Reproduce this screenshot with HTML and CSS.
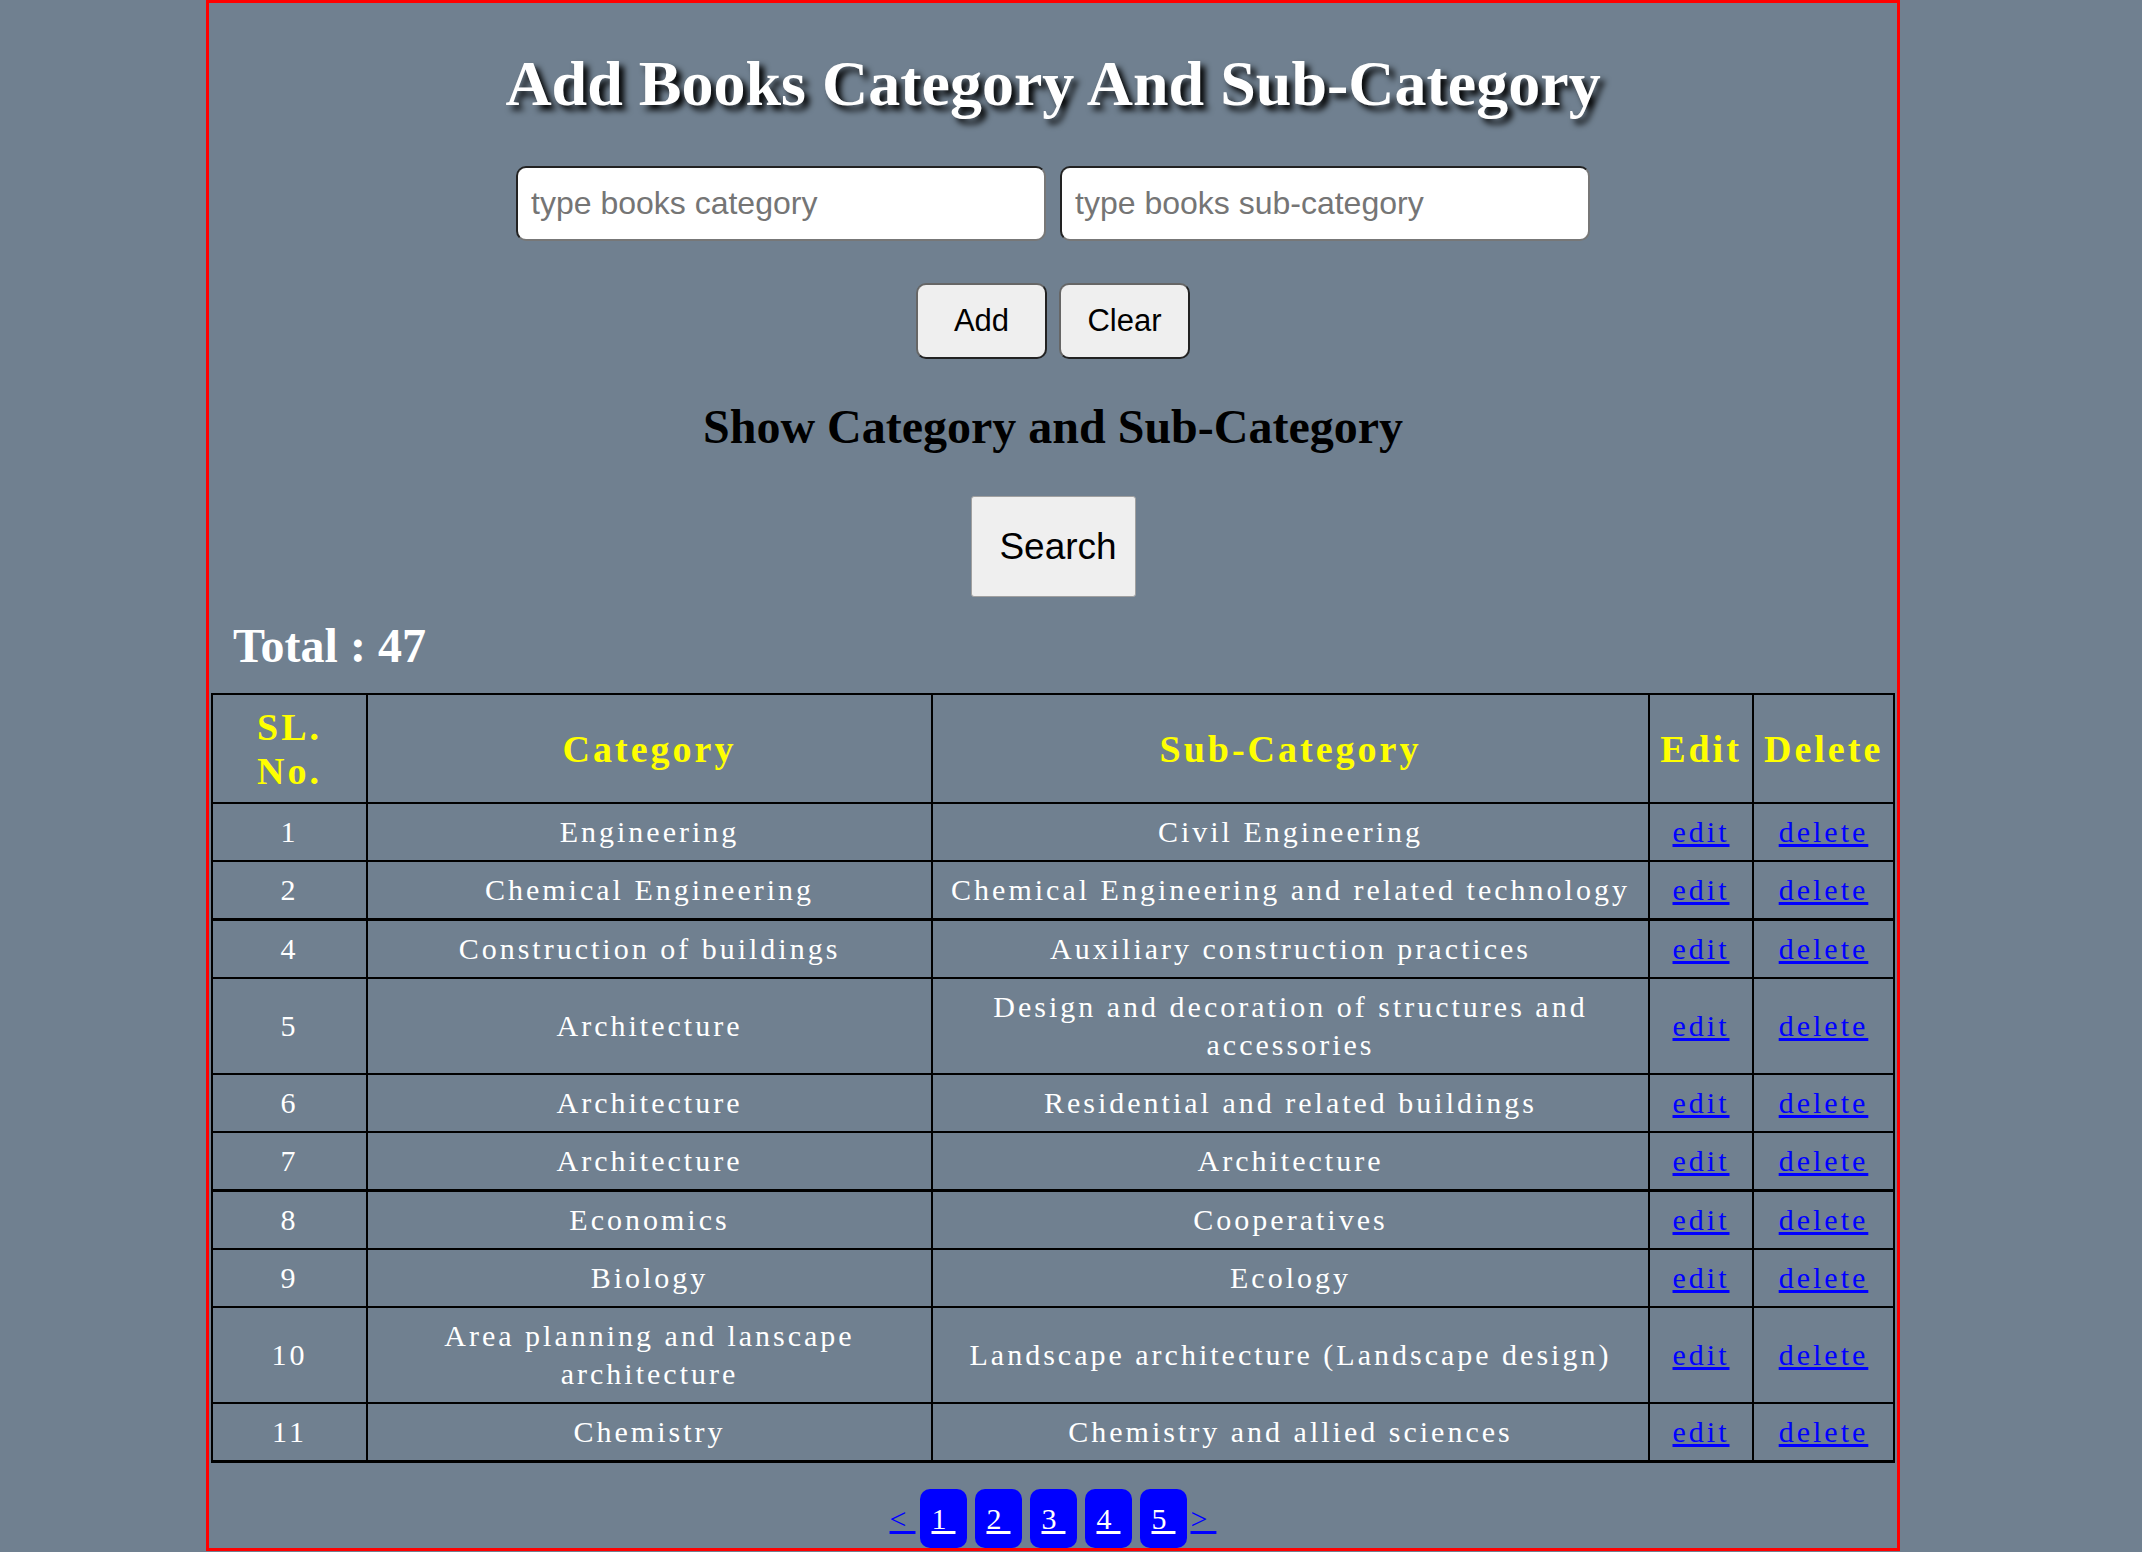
FILE: index.html
```html
<!DOCTYPE html>
<html lang="en">
<head>
<meta charset="utf-8">
<title>Books Category</title>
<link rel="stylesheet" href="styles.css">
</head>
<body>
<div class="page">
  <h1 class="title">Add Books Category And Sub-Category</h1>
  <div class="form-row">
    <input class="field" type="text" placeholder="type books category">
    <input class="field" type="text" placeholder="type books sub-category">
  </div>
  <div class="btn-row">
    <button class="btn">Add</button>
    <button class="btn">Clear</button>
  </div>
  <h2 class="subtitle">Show Category and Sub-Category</h2>
  <div class="search-row">
    <button class="search">Search</button>
  </div>
  <h3 class="total">Total : 47</h3>
  <table class="grid">
    <thead>
      <tr>
        <th class="c-sl">SL. No.</th>
        <th class="c-cat">Category</th>
        <th class="c-sub">Sub-Category</th>
        <th class="c-edit">Edit</th>
        <th class="c-del">Delete</th>
      </tr>
    </thead>
    <tbody>
      <tr><td>1</td><td>Engineering</td><td>Civil Engineering</td><td><a href="#">edit</a></td><td><a href="#">delete</a></td></tr>
      <tr><td>2</td><td>Chemical Engineering</td><td>Chemical Engineering and related technology</td><td><a href="#">edit</a></td><td><a href="#">delete</a></td></tr>
      <tr class="sep"><td>4</td><td>Construction of buildings</td><td>Auxiliary construction practices</td><td><a href="#">edit</a></td><td><a href="#">delete</a></td></tr>
      <tr><td>5</td><td>Architecture</td><td>Design and decoration of structures and accessories</td><td><a href="#">edit</a></td><td><a href="#">delete</a></td></tr>
      <tr><td>6</td><td>Architecture</td><td>Residential and related buildings</td><td><a href="#">edit</a></td><td><a href="#">delete</a></td></tr>
      <tr><td>7</td><td>Architecture</td><td>Architecture</td><td><a href="#">edit</a></td><td><a href="#">delete</a></td></tr>
      <tr class="sep"><td>8</td><td>Economics</td><td>Cooperatives</td><td><a href="#">edit</a></td><td><a href="#">delete</a></td></tr>
      <tr><td>9</td><td>Biology</td><td>Ecology</td><td><a href="#">edit</a></td><td><a href="#">delete</a></td></tr>
      <tr><td>10</td><td>Area planning and lanscape architecture</td><td>Landscape architecture (Landscape design)</td><td><a href="#">edit</a></td><td><a href="#">delete</a></td></tr>
      <tr class="last"><td>11</td><td>Chemistry</td><td>Chemistry and allied sciences</td><td><a href="#">edit</a></td><td><a href="#">delete</a></td></tr>
    </tbody>
  </table>
  <div class="pager">
    <a class="arrow" href="#">&lt;</a>
    <a class="num" href="#">1</a>
    <a class="num" href="#">2</a>
    <a class="num" href="#">3</a>
    <a class="num" href="#">4</a>
    <a class="num" href="#">5</a>
    <a class="arrow" href="#">&gt;</a>
  </div>
</div>
</body>
</html>
```

FILE: styles.css
```css
html, body {
  margin: 0;
  padding: 0;
}

body {
  background: #708090;
  font-family: "Liberation Serif", "Times New Roman", serif;
}

.page {
  width: 1684px;
  margin-left: 206px;
  border: 3px solid #ff0000;
  padding: 45px 2px 0;
}

.title {
  margin: 0;
  text-align: center;
  color: #ffffff;
  font-size: 64px;
  line-height: 72px;
  font-weight: bold;
  text-shadow: 5px 5px 6px #000000;
}

.form-row {
  margin-top: 46px;
  display: flex;
  justify-content: center;
  gap: 14px;
}

.field {
  box-sizing: border-box;
  width: 530px;
  height: 75px;
  margin: 0;
  padding: 0 13px;
  background: #ffffff;
  border: 2px solid;
  border-color: #222222 #777777 #777777 #222222;
  border-radius: 10px;
  font-family: "Liberation Sans", Arial, sans-serif;
  font-size: 32px;
  color: #000000;
  outline: none;
}

.field::placeholder {
  color: #757575;
}

.btn-row {
  margin-top: 42px;
  display: flex;
  justify-content: center;
  gap: 12px;
}

.btn {
  box-sizing: border-box;
  width: 131px;
  height: 76px;
  margin: 0;
  padding: 0;
  background: #efefef;
  border: 2px solid;
  border-color: #666666 #222222 #222222 #666666;
  border-radius: 10px;
  font-family: "Liberation Sans", Arial, sans-serif;
  font-size: 31px;
  color: #000000;
}

.subtitle {
  margin: 41px 0 0;
  text-align: center;
  color: #000000;
  font-size: 48px;
  line-height: 54px;
  font-weight: bold;
}

.search-row {
  margin-top: 42px;
  display: flex;
  justify-content: center;
}

.search {
  box-sizing: border-box;
  width: 165px;
  height: 101px;
  margin: 0;
  padding: 0 0 0 10px;
  background: #efefef;
  border: 1px solid #a0a0a0;
  border-radius: 3px;
  font-family: "Liberation Sans", Arial, sans-serif;
  font-size: 37px;
  color: #000000;
}

.total {
  margin: 23px 0 0;
  padding-left: 22px;
  color: #ffffff;
  font-size: 48px;
  line-height: 52px;
  font-weight: bold;
}

.grid {
  margin-top: 21px;
  width: 1684px;
  table-layout: fixed;
  border-collapse: separate;
  border-spacing: 0;
  border: 1px solid #000000;
}

.grid th,
.grid td {
  box-sizing: border-box;
  border: 1px solid #000000;
  text-align: center;
  vertical-align: middle;
}

.grid th {
  padding: 10px 10px 9px;
  color: #ffff00;
  font-size: 38px;
  line-height: 44px;
  font-weight: bold;
  letter-spacing: 3px;
}

.grid td {
  padding: 9px 8px;
  color: #ffffff;
  font-size: 30px;
  line-height: 38px;
  letter-spacing: 3px;
}

.c-sl { width: 155px; }
.c-cat { width: 565px; }
.c-sub { width: 717px; }
.c-edit { width: 104px; }
.c-del { width: 141px; }

.grid tr.sep td {
  border-top-width: 2px;
}

.grid tr.last td {
  border-bottom-width: 2px;
}

.grid a {
  color: #0000ff;
  text-decoration: underline;
}

.pager {
  margin-top: 26px;
  display: flex;
  justify-content: center;
  align-items: baseline;
  font-size: 30px;
  line-height: 36px;
  letter-spacing: 9px;
}

.pager .arrow {
  color: #0000ff;
  text-decoration: underline;
}

.pager .num {
  box-sizing: border-box;
  width: 47px;
  height: 59px;
  margin: 0 4px;
  padding: 12px 0 11px 12px;
  background: #0000ff;
  color: #ffffff;
  border-radius: 10px;
  text-decoration: underline;
}
```
